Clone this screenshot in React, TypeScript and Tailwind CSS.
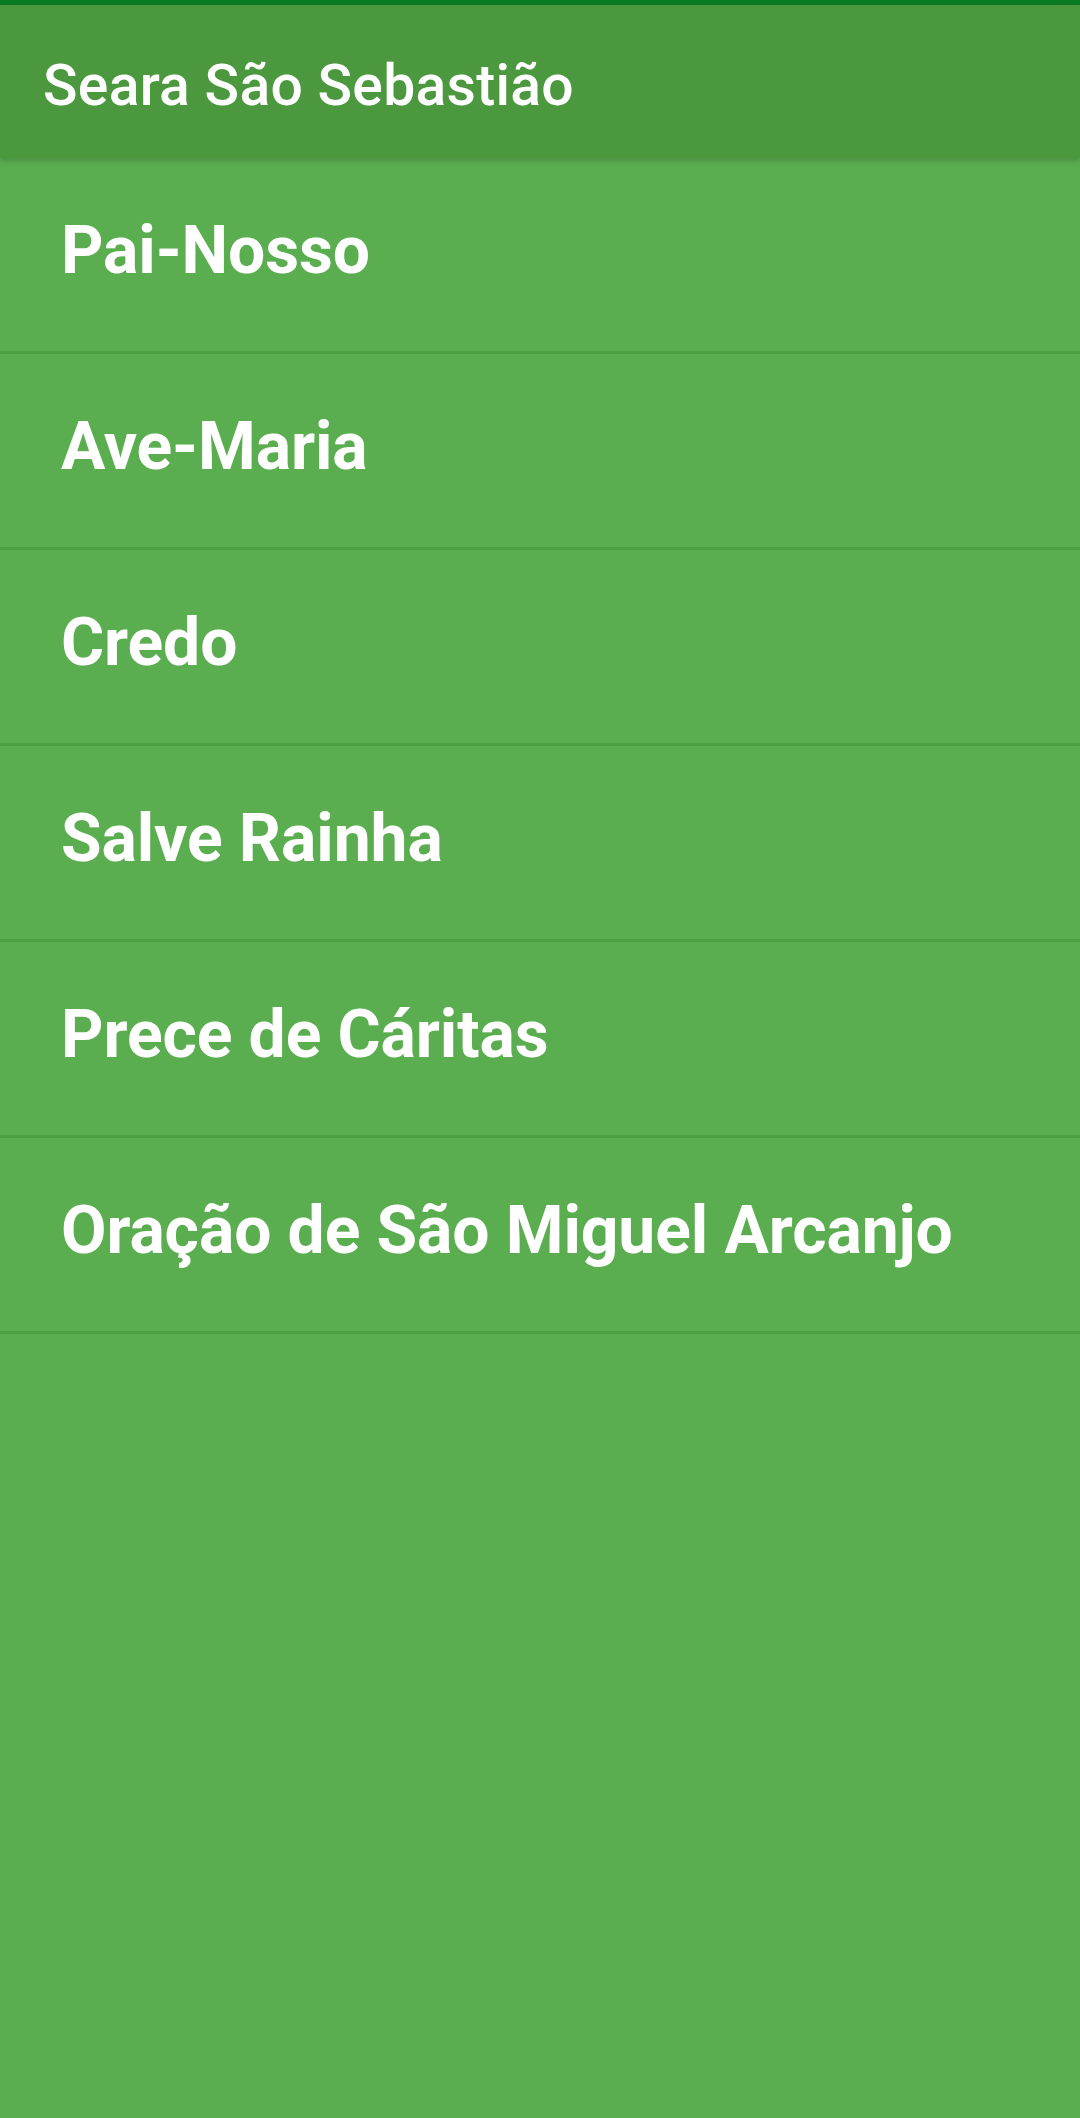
const prayers = [
  "Pai-Nosso",
  "Ave-Maria",
  "Credo",
  "Salve Rainha",
  "Prece de Cáritas",
  "Oração de São Miguel Arcanjo",
];

export default function App() {
  return (
    <div className="min-h-[2118px] w-full bg-[#5bae50] font-['Roboto',sans-serif] text-white">
      <div className="h-[5px] bg-[#0b7b22]" />
      <header className="relative z-10 flex h-[153px] items-center bg-[#4b983e] pl-[43px] pt-[8px] shadow-[0_3px_6px_rgba(0,0,0,0.18)]">
        <h1 className="text-[57px] font-medium tracking-[0.3px]">Seara São Sebastião</h1>
      </header>
      <ul>
        {prayers.map((name) => (
          <li
            key={name}
            className="flex h-[196px] items-center border-b-[3px] border-[#4e9f44] px-[61px] pb-[8px]"
          >
            <span className="text-[66px] font-bold leading-none tracking-[-0.1px]">{name}</span>
          </li>
        ))}
      </ul>
    </div>
  );
}
